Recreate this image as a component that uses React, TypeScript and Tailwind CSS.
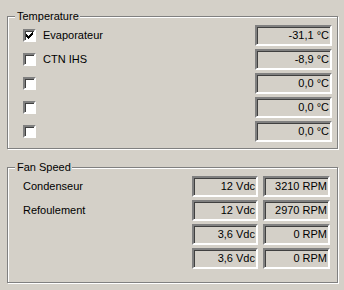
import React from 'react';

const sunken =
  'border-2 border-t-[#808080] border-l-[#808080] border-b-white border-r-white shadow-[inset_1px_1px_0_#404040]';

const temps = [
  { label: 'Evaporateur', checked: true, value: '-31,1 °C' },
  { label: 'CTN IHS', checked: false, value: '-8,9 °C' },
  { label: '', checked: false, value: '0,0 °C' },
  { label: '', checked: false, value: '0,0 °C' },
  { label: '', checked: false, value: '0,0 °C' },
];

const fans = [
  { label: 'Condenseur', volt: '12 Vdc', rpm: '3210 RPM' },
  { label: 'Refoulement', volt: '12 Vdc', rpm: '2970 RPM' },
  { label: '', volt: '3,6 Vdc', rpm: '0 RPM' },
  { label: '', volt: '3,6 Vdc', rpm: '0 RPM' },
];

const CheckBox: React.FC<{ checked: boolean }> = ({ checked }) => (
  <span className={`w-[13px] h-[13px] bg-white flex items-center justify-center ${sunken}`}>
    {checked && (
      <svg width="7" height="7" viewBox="0 0 7 7" shapeRendering="crispEdges">
        <rect x="6" y="0" width="1" height="1" fill="#000" />
        <rect x="5" y="1" width="2" height="1" fill="#000" />
        <rect x="0" y="2" width="1" height="1" fill="#000" />
        <rect x="4" y="2" width="3" height="1" fill="#000" />
        <rect x="0" y="3" width="2" height="1" fill="#000" />
        <rect x="3" y="3" width="3" height="1" fill="#000" />
        <rect x="0" y="4" width="5" height="1" fill="#000" />
        <rect x="1" y="5" width="3" height="1" fill="#000" />
        <rect x="2" y="6" width="1" height="1" fill="#000" />
      </svg>
    )}
  </span>
);

const Field: React.FC<{ text: string; width: string }> = ({ text, width }) => (
  <div className={`${width} h-[21px] ${sunken} flex items-center justify-end pr-[1px] leading-none`}>
    {text}
  </div>
);

const GroupBox: React.FC<{ title: string; className?: string; children: React.ReactNode }> = ({
  title,
  className,
  children,
}) => (
  <fieldset className={`w-[331px] border border-[#808080] shadow-[inset_1px_1px_0_#fff,1px_1px_0_#fff] ${className ?? ''}`}>
    <legend className="ml-[7px] pl-[2px] pr-[1px] leading-[13px] bg-[#d4d0c8]">{title}</legend>
    {children}
  </fieldset>
);

export default function App() {
  return (
    <div className="w-[344px] h-[290px] bg-[#d4d0c8] text-black text-[11px] font-['Liberation_Sans',Arial,sans-serif] pl-[7px] pt-[10px]">
      <GroupBox title="Temperature">
        <div className="flex flex-col gap-[3px] pt-[2px] pb-[6px] pl-[15px] pr-[5px]">
          {temps.map((t, i) => (
            <div key={i} className="flex items-center h-[21px]">
              <CheckBox checked={t.checked} />
              <span className="ml-[7px]">{t.label}</span>
              <div className="ml-auto">
                <Field text={t.value} width="w-[77px]" />
              </div>
            </div>
          ))}
        </div>
      </GroupBox>

      <GroupBox title="Fan Speed" className="mt-[12px]">
        <div className="flex flex-col gap-[3px] pt-[2px] pb-[13px] pl-[15px] pr-[7px]">
          {fans.map((f, i) => (
            <div key={i} className="flex items-center h-[21px] gap-[5px]">
              <span className="flex-1">{f.label}</span>
              <Field text={f.volt} width="w-[66px]" />
              <Field text={f.rpm} width="w-[67px]" />
            </div>
          ))}
        </div>
      </GroupBox>
    </div>
  );
}
